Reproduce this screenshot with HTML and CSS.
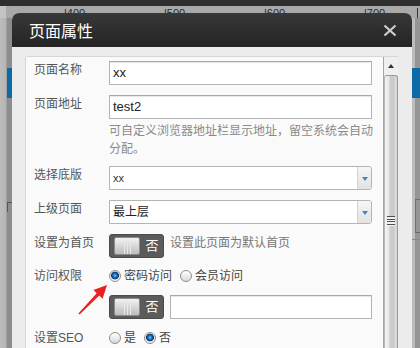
FILE: index.html
```html
<!DOCTYPE html>
<html>

<head>
    <meta charset="utf-8">
    <meta name="viewport" content="width=device-width">
    <title>页面属性</title>
    <link rel="stylesheet" href="styles.css">
</head>

<body>
    <div class="page">
        <div class="topbar"></div>
        <div class="ruler">
            <span>|400</span>
            <span>|500</span>
            <span>|600</span>
            <span class="last">|700</span>
            <span class="tick"></span>
        </div>
        <div class="stage">
            <div class="side-left">
                <div class="tab"></div>
                <div class="side-mark"></div>
            </div>
            <div class="canvas"></div>
            <div class="side-right">
                <div class="tab"></div>
                <div class="side-box"></div>
                <div class="side-line"></div>
            </div>
        </div>
    </div>

    <div class="dialog">
        <div class="dialog-head">
            <span class="dialog-title">页面属性</span>
            <span class="close">
                <svg width="14" height="13" viewBox="0 0 14 13">
                    <path d="M1.5 1.5L12.5 11.5M12.5 1.5L1.5 11.5" stroke="#cfcfcf" stroke-width="2.2" fill="none" />
                </svg>
            </span>
        </div>
        <div class="dialog-body">
            <div class="panel">
                <div class="form">
                    <div class="row">
                        <div class="label">页面名称</div>
                        <div class="input">xx</div>
                    </div>
                    <div class="row gap10">
                        <div class="label">页面地址</div>
                        <div class="control">
                            <div class="input">test2</div>
                            <div class="help">可自定义浏览器地址栏显示地址，留空系统会自动分配。</div>
                        </div>
                    </div>
                    <div class="row gap8">
                        <div class="label">选择底版</div>
                        <div class="select">
                            <span class="select-value small">xx</span>
                            <span class="select-btn"><i></i></span>
                        </div>
                    </div>
                    <div class="row gap10">
                        <div class="label">上级页面</div>
                        <div class="select">
                            <span class="select-value">最上层</span>
                            <span class="select-btn"><i></i></span>
                        </div>
                    </div>
                    <div class="row gap10">
                        <div class="label">设置为首页</div>
                        <div class="switch">
                            <span class="knob"></span>
                            <span class="switch-text">否</span>
                        </div>
                        <span class="note">设置此页面为默认首页</span>
                    </div>
                    <div class="row gap8 line">
                        <div class="label">访问权限</div>
                        <span class="radio on"></span><span class="opt">密码访问</span>
                        <span class="radio"></span><span class="opt">会员访问</span>
                    </div>
                    <div class="row gap9 indent">
                        <div class="switch">
                            <span class="knob"></span>
                            <span class="switch-text">否</span>
                        </div>
                        <div class="input short"></div>
                    </div>
                    <div class="row gap9 line">
                        <div class="label">设置SEO</div>
                        <span class="radio"></span><span class="opt">是</span>
                        <span class="radio on"></span><span class="opt">否</span>
                    </div>
                </div>
                <div class="scrollbar">
                    <div class="scroll-up"><i></i></div>
                    <div class="thumb"><span class="grip"></span></div>
                </div>
            </div>
        </div>
    </div>

    <svg class="pointer" width="420" height="348" viewBox="0 0 420 348">
        <polygon points="107,285 102.6,298.8 99.3,295.6 79.6,314.4 78.4,313.4 96.7,293.2 93.4,290" fill="#e8231f" />
    </svg>
</body>

</html>
```

FILE: styles.css
```css
html, body {
    margin: 0;
    padding: 0;
}

body {
    width: 420px;
    height: 348px;
    overflow: hidden;
    position: relative;
    font-family: "Liberation Sans", "Noto Sans CJK SC", sans-serif;
    font-size: 12px;
    background: #8c8c8c;
}

/* background editor behind the dialog */
.page {
    display: flex;
    flex-direction: column;
    height: 348px;
}

.topbar {
    height: 6px;
    background: #2e2e2e;
}

.ruler {
    height: 12px;
    display: flex;
    padding-left: 64px;
    background: linear-gradient(to right, #c4c4c4 0, #c4c4c4 6px, #a9a9a9 6px);
    color: #2a2a2a;
    font-size: 11px;
    line-height: 11px;
    padding-top: 2px;
    box-sizing: border-box;
}

.ruler span {
    width: 100px;
    flex: none;
}

.ruler span.last {
    width: 53px;
}

.ruler .tick {
    width: 1px;
    height: 10px;
    background: #333;
}

.stage {
    flex: 1;
    display: flex;
}

.side-left {
    width: 12px;
    background: linear-gradient(to right, #bdbdbd 0, #b4b4b4 6px, #8d8d8d 7px);
}

.side-left .tab {
    margin: 50px 0 0 7px;
    height: 30px;
    background: #0e6aa6;
}

.side-mark {
    margin: 104px 0 0 7px;
    width: 4px;
    height: 9px;
    border-top: 1px solid #555;
    border-left: 1px solid #555;
}

.canvas {
    flex: 1;
}

.side-right {
    width: 8px;
    background: linear-gradient(to right, #bcbcbc 0, #bcbcbc 3px, #959595 3px);
}

.side-right .tab {
    margin-top: 50px;
    height: 30px;
    background: #0e6aa6;
}

.side-box {
    margin: 101px 0 0 3px;
    height: 32px;
    border-top: 1px solid #2f7fc0;
    border-bottom: 1px solid #6a6a6a;
    border-left: 1px solid #6f6f6f;
}

.side-line {
    margin-top: 6px;
    height: 1px;
    background: #4aa5a8;
}

/* dialog */
.dialog {
    position: absolute;
    left: 12px;
    top: 13px;
    width: 400px;
    height: 335px;
    border-radius: 7px 7px 0 0;
    overflow: hidden;
    background: #ececec;
}

.dialog-head {
    height: 34px;
    display: flex;
    align-items: center;
    justify-content: space-between;
    padding: 0 15px 0 17px;
    background: linear-gradient(#383838, #242424);
}

.dialog-title {
    color: #fff;
    font-family: "Noto Sans CJK SC", sans-serif;
    font-size: 16px;
    line-height: 20px;
    margin-top: -1px;
}

.close {
    display: flex;
    margin-top: 1px;
}

.dialog-body {
    padding: 9px 14px 0 13px;
}

.panel {
    display: flex;
    border-top: 1px solid #d6d6d6;
    border-left: 1px solid #d6d6d6;
    border-radius: 3px 0 0 0;
    height: 291px;
}

.form {
    width: 357px;
    flex: none;
    padding: 4px 0 0 8px;
    box-sizing: border-box;
    background: #fafafa;
}

.row {
    display: flex;
    align-items: flex-start;
}

.row.gap8 {
    margin-top: 8px;
}

.row.gap9 {
    margin-top: 9px;
}

.row.gap10 {
    margin-top: 10px;
}

.row.line {
    align-items: center;
    height: 20px;
}

.row.indent {
    padding-left: 75px;
}

.label {
    width: 75px;
    flex: none;
    color: #555;
    line-height: 18px;
}

.row.line .label {
    line-height: 20px;
}

.control {
    width: 263px;
}

.input {
    width: 263px;
    height: 24px;
    box-sizing: border-box;
    border: 1px solid #b4b4b4;
    border-top-color: #a8a8a8;
    background: #fff;
    box-shadow: inset 0 1px 1px #e6e6e6;
    padding-left: 3px;
    font-size: 13px;
    line-height: 22px;
    color: #222;
}

.input.short {
    width: 202px;
    margin-left: 6px;
}

.help {
    width: 268px;
    margin-top: 3px;
    color: #8a8a8a;
    line-height: 18px;
}

.select {
    width: 263px;
    height: 24px;
    box-sizing: border-box;
    display: flex;
    border: 1px solid #b4b4b4;
    border-radius: 0 3px 3px 0;
    background: #fff;
}

.select-value {
    flex: 1;
    padding-left: 3px;
    line-height: 22px;
    color: #222;
}

.select-value.small {
    font-size: 11px;
    color: #333;
}

.select-btn {
    width: 13px;
    display: flex;
    align-items: center;
    justify-content: center;
    border-left: 1px solid #d2d2d2;
    background: linear-gradient(#f6f6f6, #e2e2e2);
    border-radius: 0 2px 2px 0;
}

.select-btn i {
    width: 0;
    height: 0;
    border-left: 3.5px solid transparent;
    border-right: 3.5px solid transparent;
    border-top: 4px solid #3f85c6;
    margin-top: 1px;
}

.switch {
    width: 55px;
    height: 24px;
    flex: none;
    box-sizing: border-box;
    display: flex;
    align-items: center;
    padding-left: 4px;
    border-radius: 3px;
    background: #5b5b5b;
    border: 1px solid #4b4b4b;
}

.knob {
    width: 26px;
    height: 18px;
    box-sizing: border-box;
    border: 1px solid #8c8c8c;
    border-radius: 2px;
    background:
        linear-gradient(to right, transparent 9px, #e8e8e8 9px, #e8e8e8 10px, transparent 10px, transparent 12px, #e8e8e8 12px, #e8e8e8 13px, transparent 13px, transparent 15px, #e8e8e8 15px, #e8e8e8 16px, transparent 16px),
        linear-gradient(#f2f2f2, #d2d2d2 60%, #bdbdbd);
}

.switch-text {
    flex: 1;
    text-align: center;
    color: #fff;
    font-size: 13px;
    line-height: 18px;
    margin-left: 1px;
}

.note {
    margin-left: 6px;
    color: #777;
    line-height: 18px;
}

.radio {
    width: 12px;
    height: 12px;
    flex: none;
    box-sizing: border-box;
    border-radius: 50%;
    border: 1px solid #8f8f8f;
    background: linear-gradient(#ffffff, #d9d9d9);
}

.radio.on {
    background: radial-gradient(circle at 50% 45%, #7cc6ff 0, #2a7fd0 1.5px, #0c4d8e 3px, #0a2f5e 3.6px, #e9e9e9 4.2px, #ffffff 6px);
}

.opt {
    margin: 0 8px 0 3px;
    color: #444;
    line-height: 20px;
}

/* scrollbar of the panel */
.scrollbar {
    width: 15px;
    flex: none;
    display: flex;
    flex-direction: column;
    border-left: 1px solid #a6a6a6;
    box-sizing: border-box;
    background: #efefef;
}

.scroll-up {
    height: 18px;
    flex: none;
    display: flex;
    align-items: center;
    justify-content: center;
}

.scroll-up i {
    width: 0;
    height: 0;
    border-left: 3.5px solid transparent;
    border-right: 3.5px solid transparent;
    border-bottom: 4px solid #333;
}

.thumb {
    flex: 1;
    width: 14px;
    box-sizing: border-box;
    border: 1px solid #999;
    border-left-color: #b8b8b8;
    border-bottom: none;
    border-radius: 3px 3px 0 0;
    background: linear-gradient(to right, #f4f4f4 0, #e6e6e6 4px, #cdcdcd 5px, #c9c9c9 9px, #dcdcdc 10px, #d4d4d4);
    display: flex;
    justify-content: center;
}

.grip {
    margin-top: 140px;
    width: 8px;
    height: 10px;
    background: repeating-linear-gradient(#4c4c4c 0, #4c4c4c 1px, #f2f2f2 1px, #f2f2f2 2.5px);
}

/* red annotation arrow */
.pointer {
    position: absolute;
    left: 0;
    top: 0;
    pointer-events: none;
}
```
